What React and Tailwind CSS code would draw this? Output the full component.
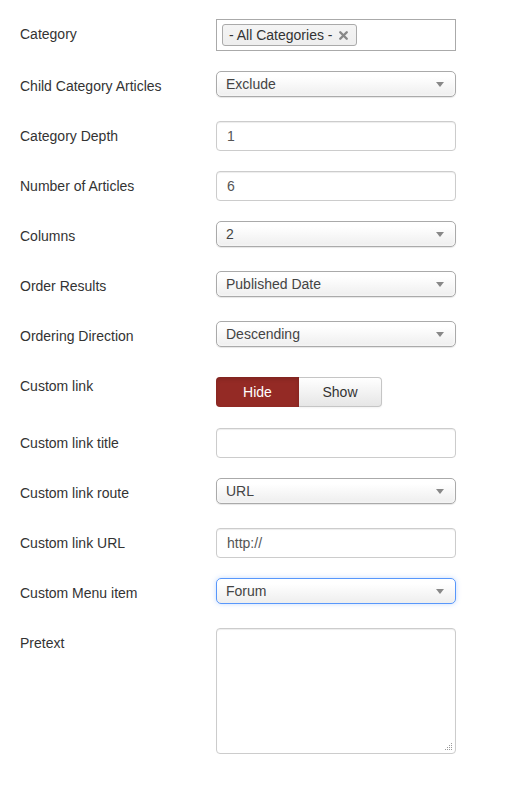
import { FiX } from "react-icons/fi";

const font = { fontFamily: '"Liberation Sans", Arial, sans-serif' };

function Label({ children }) {
  return (
    <div className="w-[216px] shrink-0 pl-[20px] pt-[5px] text-[14px] leading-[20px] text-[#333]">
      {children}
    </div>
  );
}

function Select({ value, focused }) {
  return (
    <div
      className={
        "relative flex h-[26px] w-[240px] items-center rounded-[5px] border bg-gradient-to-b from-white from-20% to-[#eeeeee] pl-[9px] text-[14px] text-[#444] " +
        (focused
          ? "border-[#5897fb] shadow-[0_0_5px_rgba(88,151,251,0.35)]"
          : "border-[#aaa] shadow-[0_0_3px_#fff_inset,0_1px_1px_rgba(0,0,0,0.1)]")
      }
    >
      {value}
      <span className="absolute right-[11px] top-[10px] h-0 w-0 border-x-[4px] border-t-[5px] border-x-transparent border-t-[#888]" />
    </div>
  );
}

function Input({ value }) {
  return (
    <div className="flex h-[30px] w-[240px] items-center rounded-[4px] border border-[#ccc] bg-white pl-[10px] text-[14px] text-[#555] shadow-[inset_0_1px_1px_rgba(0,0,0,0.075)]">
      {value}
    </div>
  );
}

function Row({ label, h = "h-[50px]", children }) {
  return (
    <div className={"flex " + h}>
      <Label>{label}</Label>
      <div>{children}</div>
    </div>
  );
}

export default function App() {
  return (
    <div className="min-h-[794px] bg-white pt-[19px]" style={font}>
      <Row label="Category" h="h-[52px]">
        <div className="flex h-[32px] w-[240px] items-center border border-[#aaa] bg-white pl-[5px]">
          <div className="flex h-[22px] items-center gap-[5px] rounded-[3px] border border-[#aaa] bg-gradient-to-b from-[#f4f4f4] to-[#eeeeee] pl-[6px] pr-[6px] text-[14px] text-[#333]">
            - All Categories -
            <FiX className="text-[13px] text-[#888]" strokeWidth={4.5} />
          </div>
        </div>
      </Row>
      <Row label="Child Category Articles">
        <Select value="Exclude" />
      </Row>
      <Row label="Category Depth">
        <Input value="1" />
      </Row>
      <Row label="Number of Articles">
        <Input value="6" />
      </Row>
      <Row label="Columns">
        <Select value="2" />
      </Row>
      <Row label="Order Results">
        <Select value="Published Date" />
      </Row>
      <Row label="Ordering Direction">
        <Select value="Descending" />
      </Row>
      <Row label="Custom link" h="h-[57px]">
        <div className="mt-[6px] flex h-[30px] w-[166px] text-[14px]">
          <div className="flex w-[83px] items-center justify-center rounded-l-[4px] bg-[#942a25] text-white shadow-[inset_0_2px_4px_rgba(0,0,0,0.15)]">
            Hide
          </div>
          <div className="flex w-[83px] items-center justify-center rounded-r-[4px] border border-l-0 border-[#c5c5c5] bg-gradient-to-b from-white to-[#e6e6e6] text-[#333] shadow-[0_1px_2px_rgba(0,0,0,0.05)]">
            Show
          </div>
        </div>
      </Row>
      <Row label="Custom link title">
        <Input value="" />
      </Row>
      <Row label="Custom link route">
        <Select value="URL" />
      </Row>
      <Row label="Custom link URL">
        <Input value="http://" />
      </Row>
      <Row label="Custom Menu item">
        <Select value="Forum" focused />
      </Row>
      <Row label="Pretext" h="h-[140px]">
        <div className="relative h-[126px] w-[240px] rounded-[4px] border border-[#ccc] bg-white shadow-[inset_0_1px_1px_rgba(0,0,0,0.075)]">
          <svg className="absolute bottom-[2px] right-[2px]" width="8" height="8" viewBox="0 0 8 8">
            <g fill="#999">
              <rect x="6" y="0" width="1" height="1" />
              <rect x="4" y="2" width="1" height="1" />
              <rect x="6" y="2" width="1" height="1" />
              <rect x="2" y="4" width="1" height="1" />
              <rect x="4" y="4" width="1" height="1" />
              <rect x="6" y="4" width="1" height="1" />
              <rect x="0" y="6" width="1" height="1" />
              <rect x="2" y="6" width="1" height="1" />
              <rect x="4" y="6" width="1" height="1" />
              <rect x="6" y="6" width="1" height="1" />
            </g>
          </svg>
        </div>
      </Row>
    </div>
  );
}
